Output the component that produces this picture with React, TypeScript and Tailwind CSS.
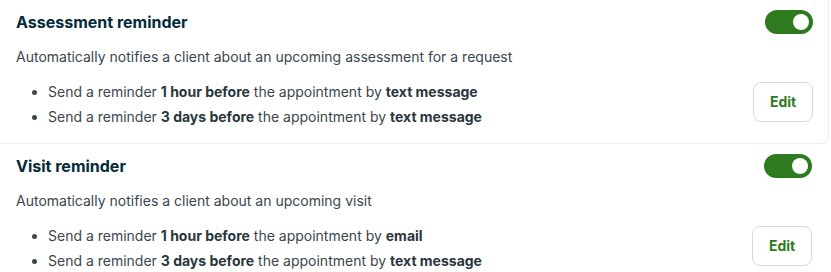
import React from 'react';

type Rule = { amount: string; channel: string };

type Reminder = {
  title: string;
  description: string;
  rules: Rule[];
};

const reminders: Reminder[] = [
  {
    title: 'Assessment reminder',
    description: 'Automatically notifies a client about an upcoming assessment for a request',
    rules: [
      { amount: '1 hour before', channel: 'text message' },
      { amount: '3 days before', channel: 'text message' },
    ],
  },
  {
    title: 'Visit reminder',
    description: 'Automatically notifies a client about an upcoming visit',
    rules: [
      { amount: '1 hour before', channel: 'email' },
      { amount: '3 days before', channel: 'text message' },
    ],
  },
];

function Toggle() {
  return (
    <button className="flex h-6 w-12 items-center justify-end rounded-full bg-[#2e7a1e] pr-1">
      <span className="block h-4 w-4 rounded-full bg-white" />
    </button>
  );
}

function ReminderCard({ reminder, first }: { reminder: Reminder; first: boolean }) {
  return (
    <div
      className={`flex h-[144px] flex-col pt-[10px] pl-4 ${
        first ? 'rounded-br-lg border-r border-b border-[#eceeef] pr-[15px]' : 'pr-[17px]'
      }`}
    >
      {/* Header */}
      <div className="flex items-center justify-between">
        <h3 className="text-base leading-5 font-bold text-[#032b3a]">{reminder.title}</h3>
        <Toggle />
      </div>

      <p className="mt-[13px] text-sm leading-5 text-[#3a464d]">{reminder.description}</p>

      {/* Rules + edit */}
      <div className="mt-3 flex items-start justify-between">
        <ul className="flex list-disc flex-col pl-8 text-sm leading-[25px] text-[#3a464d]">
          {reminder.rules.map((rule, i) => (
            <li key={i}>
              Send a reminder <b className="font-bold text-[#2a363d]">{rule.amount}</b> the appointment by{' '}
              <b className="font-bold text-[#2a363d]">{rule.channel}</b>
            </li>
          ))}
        </ul>
        <button className="mt-[3px] h-10 w-[60px] rounded-lg border border-[#d5dadd] bg-white text-sm font-bold text-[#2e7a1e]">
          Edit
        </button>
      </div>
    </div>
  );
}

export default function App() {
  return (
    <div className="h-[272px] w-[831px] overflow-hidden bg-white font-['Inter',sans-serif]">
      <div className="w-[829px]">
        {reminders.map((r, i) => (
          <ReminderCard key={r.title} reminder={r} first={i === 0} />
        ))}
      </div>
    </div>
  );
}
